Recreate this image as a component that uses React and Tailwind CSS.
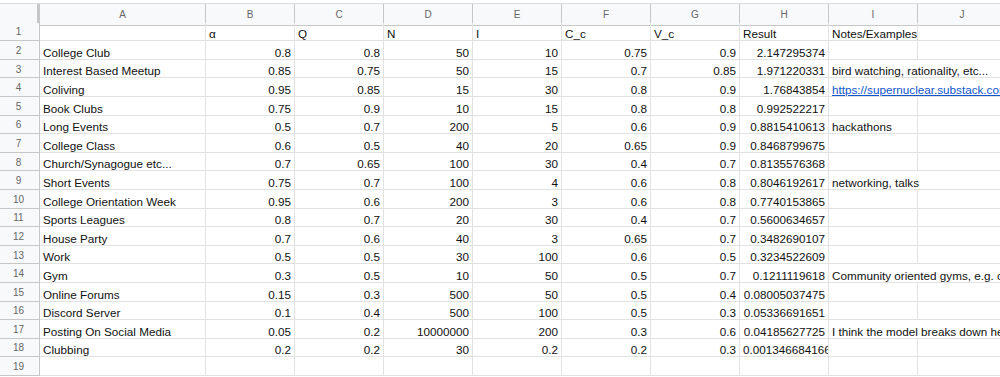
import React from 'react'

const cols = ['A', 'B', 'C', 'D', 'E', 'F', 'G', 'H', 'I', 'J']

const rows = [
  { a: '', nums: [], head: ['α', 'Q', 'N', 'I', 'C_c', 'V_c', 'Result', 'Notes/Examples'] },
  { a: 'College Club', nums: ['0.8', '0.8', '50', '10', '0.75', '0.9', '2.147295374'] },
  { a: 'Interest Based Meetup', nums: ['0.85', '0.75', '50', '15', '0.7', '0.85', '1.971220331'], note: 'bird watching, rationality, etc...', wide: true },
  { a: 'Coliving', nums: ['0.95', '0.85', '15', '30', '0.8', '0.9', '1.76843854'], note: 'https://supernuclear.substack.com/p/coliving', wide: true, link: true },
  { a: 'Book Clubs', nums: ['0.75', '0.9', '10', '15', '0.8', '0.8', '0.992522217'] },
  { a: 'Long Events', nums: ['0.5', '0.7', '200', '5', '0.6', '0.9', '0.8815410613'], note: 'hackathons' },
  { a: 'College Class', nums: ['0.6', '0.5', '40', '20', '0.65', '0.9', '0.8468799675'] },
  { a: 'Church/Synagogue etc...', nums: ['0.7', '0.65', '100', '30', '0.4', '0.7', '0.8135576368'] },
  { a: 'Short Events', nums: ['0.75', '0.7', '100', '4', '0.6', '0.8', '0.8046192617'], note: 'networking, talks', wide: true },
  { a: 'College Orientation Week', nums: ['0.95', '0.6', '200', '3', '0.6', '0.8', '0.7740153865'] },
  { a: 'Sports Leagues', nums: ['0.8', '0.7', '20', '30', '0.4', '0.7', '0.5600634657'] },
  { a: 'House Party', nums: ['0.7', '0.6', '40', '3', '0.65', '0.7', '0.3482690107'] },
  { a: 'Work', nums: ['0.5', '0.5', '30', '100', '0.6', '0.5', '0.3234522609'] },
  { a: 'Gym', nums: ['0.3', '0.5', '10', '50', '0.5', '0.7', '0.1211119618'], note: 'Community oriented gyms, e.g. climbing gyms', wide: true },
  { a: 'Online Forums', nums: ['0.15', '0.3', '500', '50', '0.5', '0.4', '0.08005037475'] },
  { a: 'Discord Server', nums: ['0.1', '0.4', '500', '100', '0.5', '0.3', '0.05336691651'] },
  { a: 'Posting On Social Media', nums: ['0.05', '0.2', '10000000', '200', '0.3', '0.6', '0.04185627725'], note: 'I think the model breaks down here', wide: true },
  { a: 'Clubbing', nums: ['0.2', '0.2', '30', '0.2', '0.2', '0.3', '0.001346684166'], longLast: true },
  { a: '', nums: [] },
]

function Cell({ children, right, span, link }) {
  return (
    <div
      className={
        'flex items-end overflow-hidden whitespace-nowrap border-r border-b border-[#e2e2e2] pb-0 text-[11.7px] leading-[12px] text-[#111] ' +
        (right ? 'justify-end pr-[3px] ' : 'pl-[3px] ') +
        (span ? 'col-span-2 ' : '')
      }
    >
      {link ? <span className="text-[#1155cc] underline">{children}</span> : children}
    </div>
  )
}

export default function App() {
  return (
    <div className="h-[377px] w-[1000px] overflow-hidden bg-white" style={{ fontFamily: '"Liberation Sans", Arial, sans-serif' }}>
      <div className="h-[4px] border-b border-[#dadce0] bg-white" />
      <div className="grid w-[1007px] grid-cols-[40px_166px_repeat(9,89px)] auto-rows-[18.6px]">
        {/* column headers */}
        <div className="h-[21.5px] border-r-[3px] border-b-[3px] border-[#c7c7c7] bg-[#f8f9fa]" />
        {cols.map((c) => (
          <div key={c} className="flex h-[21.5px] items-center justify-center border-r border-b border-[#c7c7c7] bg-[#f8f9fa] text-[10px] text-[#666]">
            {c}
          </div>
        ))}

        {rows.map((r, i) => (
          <React.Fragment key={i}>
            <div className="flex items-center justify-center border-r border-b border-[#c7c7c7] bg-[#f8f9fa] pt-[1px] pr-[2px] text-[10px] text-[#666]">
              {i + 1}
            </div>
            <Cell>{r.a}</Cell>
            {r.head ? (
              <>
                {r.head.map((h, j) => (
                  <Cell key={j}>{h}</Cell>
                ))}
                <Cell />
              </>
            ) : (
              <>
                {Array.from({ length: 7 }).map((_, j) => (
                  <Cell key={j} right={!(r.longLast && j === 6)}>{r.nums[j] || ''}</Cell>
                ))}
                {r.wide ? (
                  <Cell span link={r.link}>{r.note}</Cell>
                ) : (
                  <>
                    <Cell>{r.note || ''}</Cell>
                    <Cell />
                  </>
                )}
              </>
            )}
          </React.Fragment>
        ))}
      </div>
    </div>
  )
}
